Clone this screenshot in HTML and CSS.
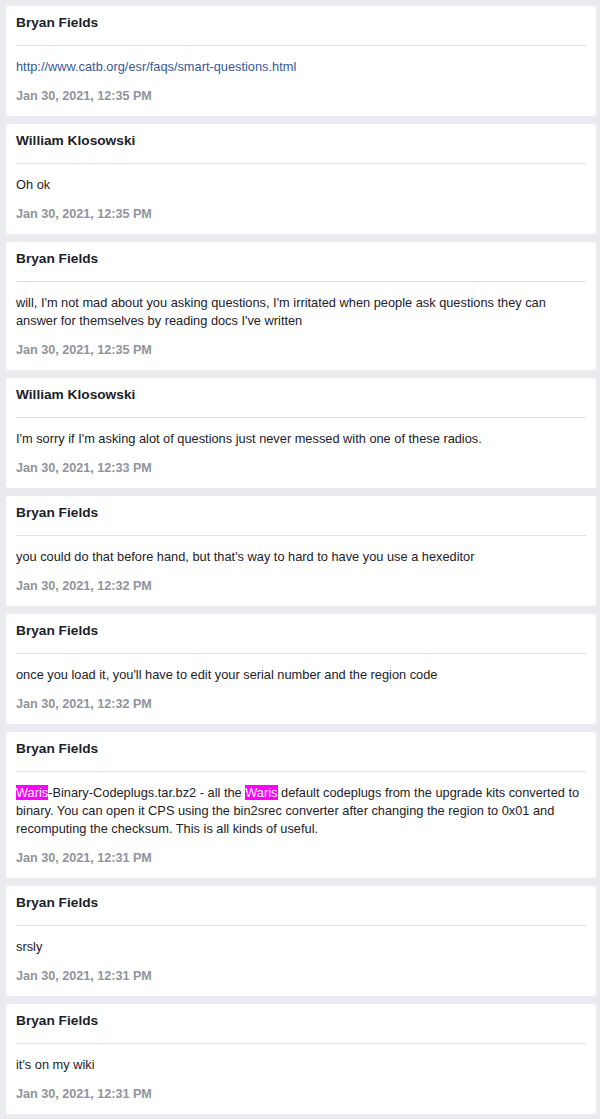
FILE: index.html
```html
<!DOCTYPE html>
<html lang="en">
<head>
  <meta charset="UTF-8" />
  <meta name="viewport" content="width=device-width, initial-scale=1.0"/>
  <title>Messages</title>
  <link rel="stylesheet" href="styles.css">
</head>
<body>
  <div class="feed">
    <div class="msg">
      <div class="author">Bryan Fields</div>
      <div class="text"><a href="#">http://www.catb.org/esr/faqs/smart-questions.html</a></div>
      <div class="time">Jan 30, 2021, 12:35 PM</div>
    </div>
    <div class="msg">
      <div class="author">William Klosowski</div>
      <div class="text">Oh ok</div>
      <div class="time">Jan 30, 2021, 12:35 PM</div>
    </div>
    <div class="msg">
      <div class="author">Bryan Fields</div>
      <div class="text">will, I'm not mad about you asking questions, I'm irritated when people ask questions they can answer for themselves by reading docs I've written</div>
      <div class="time">Jan 30, 2021, 12:35 PM</div>
    </div>
    <div class="msg">
      <div class="author">William Klosowski</div>
      <div class="text">I'm sorry if I'm asking alot of questions just never messed with one of these radios.</div>
      <div class="time">Jan 30, 2021, 12:33 PM</div>
    </div>
    <div class="msg">
      <div class="author">Bryan Fields</div>
      <div class="text">you could do that before hand, but that's way to hard to have you use a hexeditor</div>
      <div class="time">Jan 30, 2021, 12:32 PM</div>
    </div>
    <div class="msg">
      <div class="author">Bryan Fields</div>
      <div class="text">once you load it, you'll have to edit your serial number and the region code</div>
      <div class="time">Jan 30, 2021, 12:32 PM</div>
    </div>
    <div class="msg">
      <div class="author">Bryan Fields</div>
      <div class="text"><mark>Waris</mark>-Binary-Codeplugs.tar.bz2 - all the <mark>Waris</mark> default codeplugs from the upgrade kits converted to binary. You can open it CPS using the bin2srec converter after changing the region to 0x01 and recomputing the checksum. This is all kinds of useful.</div>
      <div class="time">Jan 30, 2021, 12:31 PM</div>
    </div>
    <div class="msg">
      <div class="author">Bryan Fields</div>
      <div class="text">srsly</div>
      <div class="time">Jan 30, 2021, 12:31 PM</div>
    </div>
    <div class="msg">
      <div class="author">Bryan Fields</div>
      <div class="text">it's on my wiki</div>
      <div class="time">Jan 30, 2021, 12:31 PM</div>
    </div>
  </div>
</body>
</html>
```

FILE: styles.css
```css
body { margin: 0; padding: 6px 4px 6px 6px; background: #e9ebee; font-family: "Liberation Sans", Arial, sans-serif; color: #1d2129; }
.feed { display: flex; flex-direction: column; gap: 8px; }
.msg { background: #fff; border-radius: 3px; padding: 8px 10px 11px; }
.author { font-size: 13.7px; font-weight: bold; line-height: 18px; padding-bottom: 13px; margin-bottom: 12px; border-bottom: 1px solid #dddfe2; }
.text { font-size: 12.8px; line-height: 18px; }
.text a { color: #385898; text-decoration: none; }
.text mark { background: #ff00ff; color: #fff; }
.time { font-size: 12.6px; font-weight: bold; line-height: 18px; color: #90949c; margin-top: 11px; }
```
